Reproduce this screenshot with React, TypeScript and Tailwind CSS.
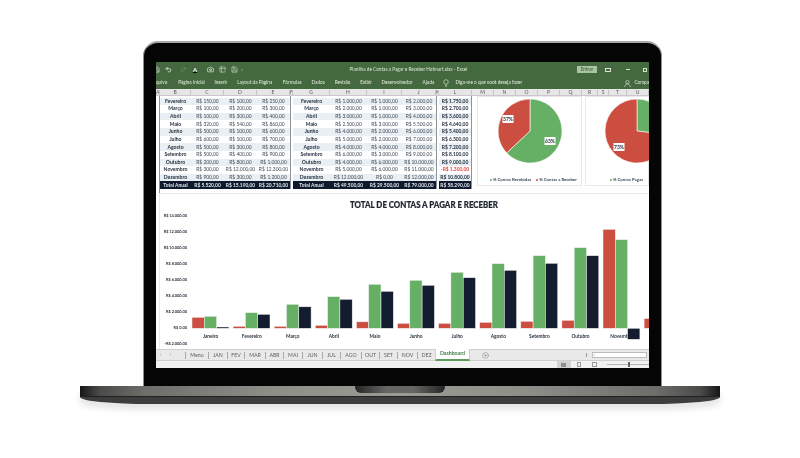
import { Camera, CirclePlus, Redo2, Save, Table2, Undo2 } from 'lucide-react';

const columns = [
  ['A', 4], ['B', 31], ['C', 33], ['D', 33], ['E', 33], ['F', 3], ['G', 37], ['H', 37], ['I', 35], ['J', 34], ['K', 3], ['L', 33],
  ['M', 22], ['N', 22], ['O', 22], ['P', 22], ['Q', 22], ['R', 16], ['S', 11], ['T', 18], ['U', 22],
] as const;

const pays = [
  ['Fevereiro', '150,00', '100,00', '250,00'],
  ['Março', '100,00', '200,00', '300,00'],
  ['Abril', '100,00', '300,00', '400,00'],
  ['Maio', '320,00', '540,00', '860,00'],
  ['Junho', '500,00', '100,00', '600,00'],
  ['Julho', '600,00', '100,00', '700,00'],
  ['Agosto', '500,00', '300,00', '800,00'],
  ['Setembro', '500,00', '400,00', '900,00'],
  ['Outubro', '200,00', '800,00', '1.000,00'],
  ['Novembro', '300,00', '12.000,00', '12.300,00'],
  ['Dezembro', '900,00', '300,00', '1.200,00'],
];

const receipts = [
  ['Fevereiro', '1.000,00', '1.000,00', '2.000,00', '1.750,00'],
  ['Março', '2.000,00', '1.000,00', '3.000,00', '2.700,00'],
  ['Abril', '3.000,00', '1.000,00', '4.000,00', '3.600,00'],
  ['Maio', '2.500,00', '3.000,00', '5.500,00', '4.640,00'],
  ['Junho', '4.000,00', '2.000,00', '6.000,00', '5.400,00'],
  ['Julho', '5.000,00', '2.000,00', '7.000,00', '6.300,00'],
  ['Agosto', '4.000,00', '4.000,00', '8.000,00', '7.200,00'],
  ['Setembro', '6.000,00', '3.000,00', '9.000,00', '8.100,00'],
  ['Outubro', '4.000,00', '6.000,00', '10.000,00', '9.000,00'],
  ['Novembro', '5.000,00', '6.000,00', '11.000,00', '-1.300,00'],
  ['Dezembro', '12.000,00', '0,00', '12.000,00', '10.800,00'],
];

const bars = [
  ['Janeiro', 11, 12, 1.3],
  ['Fevereiro', 2, 15.6, 14],
  ['Março', 2, 24, 21.5],
  ['Abril', 3, 31.6, 29],
  ['Maio', 6.5, 44, 37],
  ['Junho', 5, 48, 43],
  ['Julho', 5, 56, 50.6],
  ['Agosto', 6, 64.6, 58],
  ['Setembro', 7, 72.6, 65],
  ['Outubro', 8, 80.6, 72.6],
  ['Novembro', 99, 88.6, -11],
  ['Dezembro', 9.7, 0, 0],
] as const;

const axis = ['R$ 14.000,00', 'R$ 12.000,00', 'R$ 10.000,00', 'R$ 8.000,00', 'R$ 6.000,00', 'R$ 4.000,00', 'R$ 2.000,00', 'R$ 0,00', '-R$ 2.000,00'];

const tabs = [
  ['Menu', 23], ['JAN', 19], ['FEV', 17], ['MAR', 21], ['ABR', 18], ['MAI', 19], ['JUN', 20],
  ['JUL', 18], ['AGO', 21], ['OUT', 18], ['SET', 18], ['NOV', 20], ['DEZ', 18],
] as const;

const ribbon = [
  ['quivo', 20], ['Página Inicial', 31], ['Inserir', 28], ['Layout da Página', 40], ['Fórmulas', 35], ['Dados', 17],
  ['Revisão', 32], ['Exibir', 15], ['Desenvolvedor', 47], ['Ajuda', 16],
] as const;

const GREEN = '#66b066';
const RED = '#cc4e40';
const NAVY = '#141c30';

function slice(cx: number, cy: number, r: number, from: number, to: number) {
  const point = (p: number) => {
    const a = p * 2 * Math.PI;
    return `${cx + r * Math.sin(a)} ${cy - r * Math.cos(a)}`;
  };
  return `M${cx} ${cy} L${point(from)} A${r} ${r} 0 ${to - from > 0.5 ? 1 : 0} 1 ${point(to)} Z`;
}

function Row({ cells, widths, index, total }: { cells: string[]; widths: number[]; index: number; total?: boolean }) {
  return (
    <div className={`flex h-[7.64px] items-center ${total ? 'bg-[#101a2e]' : index % 2 ? 'bg-white' : 'bg-[#e9eff3]'}`}>
      {cells.map((cell, i) => (
        <div
          key={i}
          style={{ width: widths[i] }}
          className={`text-center leading-none whitespace-nowrap ${total ? 'font-bold text-[#dfe8e8]' : i === 0 ? 'text-[5.1px] font-bold text-[#1c2a3a]' : 'text-[#3f4b56]'}`}
        >
          {cell}
        </div>
      ))}
    </div>
  );
}

function PayTable() {
  const widths = [31, 33, 33, 33];
  return (
    <div className="flex h-[93px] flex-col justify-end overflow-hidden border-r border-[#8d9499]">
      {pays.map((r, i) => (
        <Row key={r[0]} cells={r.map((c, j) => (j ? `R$ ${c}` : c))} widths={widths} index={i} />
      ))}
      <Row cells={['Total Anual', 'R$ 5.520,00', 'R$ 15.190,00', 'R$ 20.710,00']} widths={widths} index={0} total />
    </div>
  );
}

function ReceiptTable() {
  const widths = [37, 37, 35, 34];
  return (
    <div className="flex h-[93px]">
      <div className="flex flex-col justify-end overflow-hidden border-r border-[#8d9499]">
        {receipts.map((r, i) => (
          <Row key={r[0]} cells={r.slice(0, 4).map((c, j) => (j ? `R$ ${c}` : c))} widths={widths} index={i} />
        ))}
        <Row cells={['Total Anual', 'R$ 49.500,00', 'R$ 29.500,00', 'R$ 79.000,00']} widths={widths} index={0} total />
      </div>
      <div className="ml-[2px] flex w-[33px] flex-col justify-end overflow-hidden border-r border-[#8d9499] font-bold whitespace-nowrap">
        {receipts.map((r, i) => (
          <div key={r[0]} className={`flex h-[7.64px] items-center justify-center leading-none ${i % 2 ? 'bg-white' : 'bg-[#e9eff3]'} ${r[4].startsWith('-') ? 'text-[#e0453a]' : 'text-[#1c2a3a]'}`}>
            {r[4].startsWith('-') ? `-R$ ${r[4].slice(1)}` : `R$ ${r[4]}`}
          </div>
        ))}
        <div className="flex h-[7.64px] items-center justify-center bg-[#101a2e] leading-none text-[#dfe8e8]">R$ 58.290,00</div>
      </div>
    </div>
  );
}

function PieCard({ width, cx, parts, children }: { width: number; cx: number; parts: { from: number; to: number; color: string; label: string; lx: number; ly: number }[]; children: React.ReactNode }) {
  return (
    <div style={{ width }} className="relative h-[90px] shrink-0 border border-[#e8e8e8] bg-white">
      <svg width={width} height={88} className="block">
        {parts.map((p) => (
          <path key={p.label} d={slice(cx, 34, 32, p.from, p.to)} fill={p.color} stroke="#ffffff" strokeWidth="0.6" />
        ))}
        {parts.map((p) => (
          <g key={p.label}>
            <rect x={p.lx - 5.5} y={p.ly - 4} width={11} height={8} fill="#ffffff" />
            <text x={p.lx} y={p.ly + 1.8} textAnchor="middle" fontSize="5" fontWeight="700" fill="#26323e">{p.label}</text>
          </g>
        ))}
      </svg>
      {children}
    </div>
  );
}

function LegendItem({ dot, label }: { dot: string; label: string }) {
  return (
    <span className="flex items-center gap-[1px]">
      <i className={`h-[2px] w-[2px] rounded-full ${dot}`} />
      {label}
    </span>
  );
}

function Chart() {
  const base = 134.3;
  return (
    <svg width={490} height={156} className="block">
      <text x={264} y={13.5} textAnchor="middle" fontSize="9" fontWeight="900" fill="#1d2530" stroke="#1d2530" strokeWidth="0.2" textLength={148} lengthAdjust="spacingAndGlyphs">TOTAL DE CONTAS A PAGAR E RECEBER</text>
      {axis.map((label, i) => (
        <text key={label} x={27} y={22.6 + i * 16.1} textAnchor="end" fontSize="3.9" fontWeight="700" fill="#2a3440">{label}</text>
      ))}
      {bars.map(([month], i) => (
        <text key={month} x={50.6 + i * 41.1} y={144} textAnchor="middle" fontSize="4.8" fontWeight="700" fill="#2a3440">{month}</text>
      ))}
      {bars.map(([month, red, green, navy], i) => {
        const x = 32 + i * 41.1;
        return (
          <g key={month} stroke="#f2f2f2" strokeWidth="0.5">
            <rect x={x} y={base - red} width={12.3} height={red} fill={RED} />
            {green > 0 && <rect x={x + 12.3} y={base - green} width={12.3} height={green} fill={GREEN} />}
            {navy > 0 && <rect x={x + 24.6} y={base - navy} width={12.3} height={navy} fill={NAVY} />}
            {navy < 0 && <rect x={x + 24.6} y={base} width={12.3} height={-navy} fill={NAVY} />}
          </g>
        );
      })}
    </svg>
  );
}

export default function App() {
  return (
    <div className="h-[458px] w-[800px] overflow-hidden bg-white pt-[41px] font-['Lato',sans-serif]">
      {/* lid */}
      <div className="ml-[143px] h-[345px] w-[519px] rounded-t-[15px] border-x border-t-2 border-x-[#8f8f8f] border-t-[#a8a8a8] bg-[#050505] pt-[19px] pl-[12px]">
        <div className="flex h-[306px] w-[493px] flex-col overflow-hidden bg-white text-[4.9px] blur-[0.3px]">
          {/* title bar */}
          <div className="relative flex h-[15px] shrink-0 items-center bg-[#44693e] text-[#d7e2d3]">
            <Save size={7} strokeWidth={1.6} className="-ml-[3px] text-white" />
            <Undo2 size={7} strokeWidth={2.2} className="ml-[5px] text-white" />
            <Redo2 size={7} strokeWidth={1.6} className="ml-[8px] text-[#7f9b7a]" />
            <span className="ml-[6px] border-b border-b-black text-[6px] leading-[5px] font-bold text-white">A</span>
            <Camera size={7} strokeWidth={2} className="ml-[10px] text-white" />
            <Table2 size={7} strokeWidth={1.6} className="ml-[5px] text-[#dfe7dc]" />
            <Save size={7} strokeWidth={1.6} className="ml-[5px] text-[#eef2ec]" />
            <span className="ml-[3px] text-[4px] text-[#a9bea4]">▿</span>
            <span className="absolute left-0 w-[505px] text-center text-[4.7px] whitespace-nowrap">Planilha de Contas a Pagar e Receber Hotmart.xlsx - Excel</span>
            <span className="absolute left-[421px] flex h-[7px] w-[20px] items-center justify-center bg-[#a9c4a2] text-[4.7px] text-[#33502e]">Entrar</span>
            <span className="absolute left-[449px] h-[4px] w-[6px] border border-[#d7e2d3]" />
            <span className="absolute left-[470px] h-px w-[4px] bg-[#d7e2d3]" />
            <span className="absolute left-[487px] h-[4px] w-[4px] border border-[#d7e2d3]" />
          </div>
          {/* ribbon tabs */}
          <div className="flex h-[12px] shrink-0 items-center bg-[#44693e] text-[4.7px] whitespace-nowrap text-[#e4ebe1]">
            {ribbon.map(([label, width]) => (
              <span key={label} style={{ width }} className={label === 'quivo' ? '' : 'text-center'}>{label}</span>
            ))}
            <svg width="6" height="8" viewBox="0 0 6 8" className="mr-[6px] ml-[7px] shrink-0" fill="none" stroke="#e4ebe1" strokeWidth="0.6">
              <circle cx="3" cy="3" r="2.3" /><path d="M2 6.2h2M2.2 7.4h1.6" />
            </svg>
            <span className="w-[169px] shrink-0">Diga-me o que você deseja fazer</span>
            <svg width="7" height="7" viewBox="0 0 7 7" className="shrink-0" fill="none" stroke="#e4ebe1" strokeWidth="0.6">
              <circle cx="3.5" cy="2.2" r="1.7" /><path d="M.6 7c.3-2 1.4-3 2.9-3s2.6 1 2.9 3" />
            </svg>
            <span className="ml-[3px]">Compa</span>
          </div>
          {/* column headers */}
          <div className="flex h-[7px] shrink-0 items-center border-b border-[#c9c9c9] bg-[#e6e6e6] text-[5px] text-[#55595c]">
            {columns.map(([name, width]) => (
              <div key={name} style={{ width }} className="shrink-0 overflow-hidden border-r border-[#c4c4c4] text-center leading-none">{name}</div>
            ))}
          </div>
          {/* tables and pies */}
          <div className="flex h-[97px] shrink-0 pl-[3px]">
            <div className="flex gap-[2px] border-l border-[#8d9499]">
              <PayTable />
              <ReceiptTable />
            </div>
            <div className="ml-[5px] flex gap-[3px]">
              <PieCard
                width={105}
                cx={52}
                parts={[
                  { from: 0, to: 0.63, color: GREEN, label: '63%', lx: 72, ly: 44 },
                  { from: 0.63, to: 1, color: RED, label: '37%', lx: 30, ly: 22 },
                ]}
              >
                <div className="absolute top-[80px] left-[12px] flex gap-[5px] text-[4.3px] font-bold whitespace-nowrap text-[#3a4650]">
                  <LegendItem dot="bg-[#66b066]" label="% Contas Recebidas" />
                  <LegendItem dot="bg-[#cc4e40]" label="% Contas a Receber" />
                </div>
              </PieCard>
              <PieCard
                width={64}
                cx={51}
                parts={[
                  { from: 0, to: 0.27, color: GREEN, label: '27%', lx: 76, ly: 30 },
                  { from: 0.27, to: 1, color: RED, label: '73%', lx: 33, ly: 50 },
                ]}
              >
                <div className="absolute top-[80px] left-[24px] flex gap-[11px] text-[4.3px] font-bold whitespace-nowrap text-[#3a4650]">
                  <LegendItem dot="bg-[#66b066]" label="% Contas Pagas" />
                  <LegendItem dot="bg-[#cc4e40]" label="%" />
                </div>
              </PieCard>
            </div>
          </div>
          {/* chart */}
          <div className="ml-[3px] h-[156px] shrink-0 overflow-hidden border-t border-l border-[#e8e8e8]">
            <Chart />
          </div>
          {/* sheet tabs */}
          <div className="flex h-[12px] shrink-0 items-center border-y border-[#cfcfcf] bg-[#e9e9e9] text-[5.2px] text-[#5b5f63]">
            <div className="flex w-[29px] gap-[8px] pl-[4px] text-[#9a9a9a]"><span>‹</span><span>›</span></div>
            {tabs.map(([name, width]) => (
              <div key={name} style={{ width }} className="shrink-0 border-l border-[#a9a9a9] text-center leading-[7px]">{name}</div>
            ))}
            <div className="flex h-[12px] w-[35px] shrink-0 items-center justify-center border-x border-[#cfcfcf] border-b-2 border-b-[#5f9a5f] bg-white font-bold text-[#3f7a3f]">Dashboard</div>
            <CirclePlus size={7} className="ml-[12px] text-[#707070]" strokeWidth={1.4} />
            <span className="ml-[97px] h-[4px] w-px bg-[#9a9a9a]" />
            <div className="ml-[5px] flex h-[6px] w-[55px] items-center border border-[#bdbdbd] bg-white pl-[1px] text-[4px] text-[#555]">‹</div>
          </div>
          {/* status bar */}
          <div className="flex h-[7px] shrink-0 items-center bg-[#f1f1f1]">
            <div className="ml-[401px] flex h-[7px] w-[14px] items-center justify-center bg-[#d2d2d2]"><i className="h-[4px] w-[5px] bg-[#8f8f8f]" /></div>
            <i className="ml-[6px] h-[5px] w-[4px] border border-[#9a9a9a]" />
            <i className="ml-[11px] h-[5px] w-[5px] border border-[#9a9a9a]" />
            <div className="relative ml-[10px] h-px w-[43px] bg-[#b5b5b5]">
              <i className="absolute top-[-2px] left-[21px] h-[5px] w-[2px] bg-[#666]" />
            </div>
          </div>
        </div>
      </div>
      {/* base */}
      <div className="relative ml-[80px] h-[18px] w-[640px] overflow-hidden rounded-b-[70px_7px] shadow-[0_6px_6px_rgba(0,0,0,0.1)]">
        <div className="h-[10px] bg-[linear-gradient(90deg,#161616,#4a4a48_3%,#6d6d6a_10%,#8e8e89_30%,#9a9a95_50%,#8e8e89_70%,#6d6d6a_90%,#4a4a48_97%,#161616)]" />
        <div className="h-[8px] border-t border-[#222] bg-[#3d3d3d]" />
        <div className="absolute top-0 left-[275px] h-[7px] w-[90px] rounded-b-[6px] bg-[linear-gradient(90deg,#242424,#666664_35%,#666664_65%,#242424)]" />
      </div>
    </div>
  );
}
